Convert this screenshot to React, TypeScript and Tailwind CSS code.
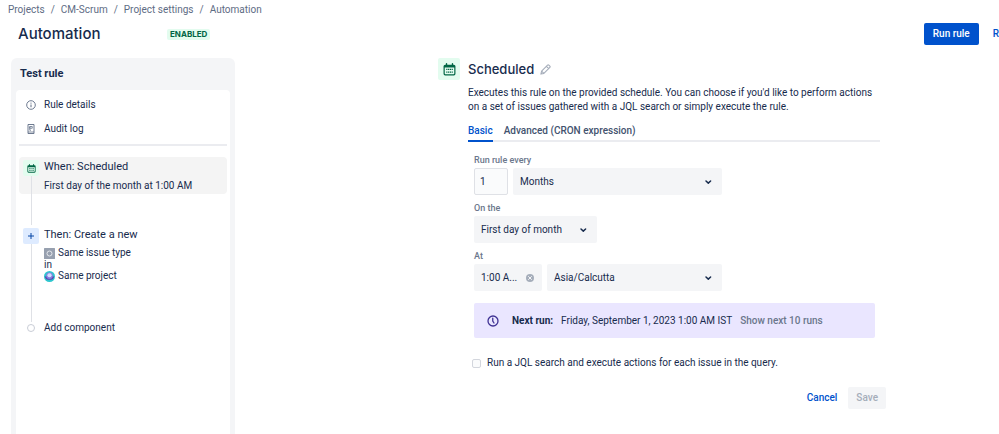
import { ReactNode, SVGProps, useState } from "react";

const breadcrumbs = ["Projects", "CM-Scrum", "Project settings", "Automation"];

function CalendarIcon(props: SVGProps<SVGSVGElement>) {
  return (
    <svg viewBox="0 0 24 24" fill="none" aria-hidden="true" {...props}>
      <path d="M6.500 1.500v4M17.500 1.500v4" stroke="currentColor" strokeWidth="2.600" strokeLinecap="round" />
      <path
        fillRule="evenodd"
        clipRule="evenodd"
        fill="currentColor"
        d="M4 3h16a3 3 0 0 1 3 3v14a3 3 0 0 1-3 3H4a3 3 0 0 1-3-3V6a3 3 0 0 1 3-3Zm-.8 5.500V19.500a1.300 1.300 0 0 0 1.300 1.300h15a1.300 1.300 0 0 0 1.300-1.300V8.500H3.200Z"
      />
      <path
        fill="currentColor"
        d="M6 10.700h2.200v2.200H6zM9.300 10.700h2.200v2.200H9.300zM12.600 10.700h2.200v2.200h-2.200zM15.900 10.700h2.200v2.200h-2.200zM6 15.600h2.200v2.200H6zM9.300 15.600h2.200v2.200H9.300zM12.600 15.600h2.200v2.200h-2.200zM15.900 15.600h2.200v2.200h-2.200z"
      />
    </svg>
  );
}

function InfoIcon() {
  return (
    <svg viewBox="0 0 20 20" className="size-[10px]" fill="none" stroke="currentColor" strokeWidth="1.800" aria-hidden="true">
      <circle cx="10" cy="10" r="8.600" />
      <path d="M10 9v5.500" strokeWidth="2" />
      <circle cx="10" cy="6.200" r="1.200" fill="currentColor" stroke="none" />
    </svg>
  );
}

function LogIcon() {
  return (
    <svg viewBox="0 0 20 20" className="size-[10px]" fill="none" stroke="currentColor" strokeWidth="1.800" aria-hidden="true">
      <path d="M4 1h12v18H4z" strokeLinejoin="round" />
      <path d="M7.500 5h5v3.500h-5zM7.500 5v7.500h2.500M4 16h12" strokeWidth="1.500" />
    </svg>
  );
}

function PencilIcon() {
  return (
    <svg viewBox="0 0 24 24" className="size-[11px]" fill="none" stroke="currentColor" strokeWidth="2.400" strokeLinejoin="round" aria-hidden="true">
      <path d="M2 22l1.500-6.500L16.500 2.500a2 2 0 0 1 2.800 0l2.200 2.200a2 2 0 0 1 0 2.800L8.500 20.500 2 22ZM14 5l5 5M3.500 15.500l5 5" />
    </svg>
  );
}

function ClockIcon() {
  return (
    <svg viewBox="0 0 24 24" className="size-3" fill="none" stroke="currentColor" strokeWidth="2.600" strokeLinecap="round" aria-hidden="true">
      <circle cx="12" cy="12" r="10" />
      <path d="M11.500 6.500V12l2.500 4" />
    </svg>
  );
}

function IssueTypeIcon() {
  return (
    <svg viewBox="0 0 22 22" className="size-[11px]" aria-hidden="true">
      <rect width="22" height="22" rx="1" fill="#97a0af" />
      <circle cx="11" cy="11" r="5" fill="none" stroke="#e4e7ec" strokeWidth="2" />
    </svg>
  );
}

function ProjectIcon() {
  return (
    <svg viewBox="0 0 22 22" className="size-[11px]" aria-hidden="true">
      <circle cx="11" cy="11" r="11" fill="#2fc6cf" />
      <path d="M1.500 11h19a9.800 9.800 0 0 1-19 0Z" fill="#5b3fb0" />
      <circle cx="11" cy="9.500" r="6.500" fill="#8a7fe0" />
      <circle cx="11" cy="8.500" r="4.200" fill="#d5dcff" />
      <path d="M4 17.500h14a10 10 0 0 1-14 0Z" fill="#2fc6cf" />
    </svg>
  );
}

function Step({ icon, active, children }: { icon: ReactNode; active?: boolean; children: ReactNode }) {
  return (
    <div className={`flex rounded-sm ${active ? "bg-[#f4f4f4]" : ""}`}>
      <div className="flex w-6 flex-col items-center pt-[3px]">
        {icon}
        <div className="w-px flex-1 bg-[#dfe1e6]" />
      </div>
      <div className="flex-1 pl-px">{children}</div>
    </div>
  );
}

function Connector({ className }: { className: string }) {
  return (
    <div className={`flex w-6 justify-center ${className}`}>
      <div className="w-px bg-[#dfe1e6]" />
    </div>
  );
}

function Select({ id, label, value, className }: { id: string; label?: string; value: string; className: string }) {
  return (
    <div className={`relative ${className}`}>
      <select
        id={id}
        aria-label={label}
        defaultValue={value}
        className="h-[27px] w-full appearance-none rounded-xs bg-[#f4f5f7] pr-6 pl-[7px]"
      >
        <option>{value}</option>
      </select>
      <svg
        viewBox="0 0 12 12"
        className="pointer-events-none absolute top-2 right-2 size-3"
        fill="none"
        stroke="currentColor"
        strokeWidth="1.500"
        strokeLinecap="round"
        strokeLinejoin="round"
        aria-hidden="true"
      >
        <path d="M4 5l2.300 2.100L8.600 5" />
      </svg>
    </div>
  );
}

function Sidebar() {
  return (
    <aside className="flex w-56 shrink-0 flex-col rounded-t-md bg-[#f4f5f7] px-[5px]">
      <h2 className="px-1 py-2 text-[11px] leading-4 font-bold">Test rule</h2>
      <div className="flex-1 rounded-t-sm bg-white px-[3px] pt-[3px]">
        <nav className="border-b-2 border-[#ebecf0] pb-[3px]">
          <a href="#details" className="flex h-6 items-center pl-[7px]">
            <span className="w-[18px] text-[#5e6c84]"><InfoIcon /></span>
            Rule details
          </a>
          <a href="#audit" className="flex h-6 items-center pl-[7px]">
            <span className="w-[18px] text-[#5e6c84]"><LogIcon /></span>
            Audit log
          </a>
        </nav>

        <div className="pt-[11px]">
          <Step
            active
            icon={
              <span className="grid size-4 place-items-center rounded-xs bg-[#e3fcef] text-[#006644]">
                <CalendarIcon className="size-[9px]" />
              </span>
            }
          >
            <h3 className="pt-[2px] text-[11px] leading-4">When: Scheduled</h3>
            <p className="pt-1 pb-px leading-[14px]">First day of the month at 1:00 AM</p>
          </Step>
          <Connector className="h-[31px]" />
          <Step
            icon={
              <span className="grid size-4 place-items-center rounded-xs bg-[#deebff] text-[#0747a6]">
                <svg viewBox="0 0 6 6" className="size-[6px]" stroke="currentColor" aria-hidden="true">
                  <path d="M3 0v6M0 3h6" />
                </svg>
              </span>
            }
          >
            <h3 className="pt-[2px] text-[11px] leading-4">Then: Create a new</h3>
            <div className="pt-1 leading-3">
              <p className="flex items-center gap-[3px]"><IssueTypeIcon /> Same issue type</p>
              <p className="leading-[11px]">in</p>
              <p className="flex items-center gap-[3px]"><ProjectIcon /> Same project</p>
            </div>
          </Step>
          <Connector className="h-10" />
          <button type="button" className="flex items-center">
            <span className="grid w-6 place-items-center">
              <span className="size-2 rounded-full border border-[#c9cdd6]" />
            </span>
            <span className="pl-px leading-3">Add component</span>
          </button>
        </div>
      </div>
    </aside>
  );
}

function ScheduleForm() {
  const [count, setCount] = useState("1");
  const [time, setTime] = useState("1:00 A...");

  return (
    <form className="w-[448px]" onSubmit={(e) => e.preventDefault()}>
      <div className="flex gap-2">
        <span className="grid size-[22px] shrink-0 place-items-center rounded-xs bg-[#e3fcef] text-[#006644]">
          <CalendarIcon className="size-[13px]" />
        </span>
        <div className="flex-1 pr-[6px]">
          <div className="flex h-[22px] items-center gap-[6px]">
            <h2 className="font-['Inter',sans-serif] text-[13px] font-medium">Scheduled</h2>
            <button type="button" aria-label="Rename" className="text-[#a5adba]"><PencilIcon /></button>
          </div>
          <p className="pt-[6px] leading-[14px]">
            Executes this rule on the provided schedule. You can choose if you'd like to perform actions
            on a set of issues gathered with a JQL search or simply execute the rule.
          </p>

          <div role="tablist" className="mt-[6px] flex gap-[11px] border-b-2 border-[#ebecf0] font-medium">
            <button type="button" role="tab" aria-selected="true" className="-mb-[2px] border-b-2 border-[#0052cc] pt-1 pb-[2px] leading-[14px] text-[#0052cc]">
              Basic
            </button>
            <button type="button" role="tab" aria-selected="false" className="-mb-[2px] pt-1 pb-1 leading-[14px] text-[#42526e]">
              Advanced (CRON expression)
            </button>
          </div>

          <div className="pt-[10px] pr-[5px] pl-[6px]">
            <label htmlFor="count" className="block text-[9px] leading-4 font-medium text-[#6b778c]">Run rule every</label>
            <div className="flex gap-[5px]">
              <input
                id="count"
                type="text"
                value={count}
                onChange={(e) => setCount(e.target.value)}
                className="h-[27px] w-[34px] rounded-xs border border-[#dfe1e6] bg-[#fafbfc] px-[5px]"
              />
              <Select id="unit" label="Interval unit" value="Months" className="w-[209px]" />
            </div>

            <label htmlFor="day" className="mt-[5px] block text-[9px] leading-4 font-medium text-[#6b778c]">On the</label>
            <Select id="day" value="First day of month" className="w-[123px]" />

            <label htmlFor="time" className="mt-[5px] block text-[9px] leading-4 font-medium text-[#6b778c]">At</label>
            <div className="flex gap-[5px]">
              <div className="flex h-[27px] w-[68px] items-center rounded-xs bg-[#f4f5f7] pr-2 pl-[7px]">
                <input
                  id="time"
                  type="text"
                  value={time}
                  onChange={(e) => setTime(e.target.value)}
                  className="w-full min-w-0 bg-transparent"
                />
                <button type="button" aria-label="Clear time" onClick={() => setTime("")} className="shrink-0">
                  <svg viewBox="0 0 16 16" className="size-2" aria-hidden="true">
                    <circle cx="8" cy="8" r="8" fill="#a5adba" />
                    <path d="M5 5l6 6M11 5l-6 6" stroke="#f4f5f7" strokeWidth="2" strokeLinecap="round" />
                  </svg>
                </button>
              </div>
              <Select id="zone" label="Time zone" value="Asia/Calcutta" className="w-[175px]" />
            </div>

            <div className="mt-3 flex h-[35px] items-center rounded-xs bg-[#eae6ff] pl-[13px]">
              <span className="w-[25px] text-[#403294]"><ClockIcon /></span>
              <b className="font-bold">Next run:</b>
              <span className="pl-2">Friday, September 1, 2023 1:00 AM IST</span>
              <button type="button" className="pl-2 font-medium text-[#6b778c]">Show next 10 runs</button>
            </div>
          </div>

          <label className="mt-[18px] flex items-center gap-[6px] pl-1 leading-[14px]">
            <input type="checkbox" className="size-[9px] appearance-none rounded-xs border border-[#d3d6dd] bg-[#fafbfc] checked:bg-[#0052cc]" />
            Run a JQL search and execute actions for each issue in the query.
          </label>
        </div>
      </div>

      <div className="mt-[17px] flex h-[22px] justify-end gap-[11px] font-medium">
        <button type="button" className="text-[#0052cc]">Cancel</button>
        <button type="submit" disabled className="rounded-xs bg-[#f4f5f7] px-2 text-[#a5adba]">Save</button>
      </div>
    </form>
  );
}

export default function App() {
  return (
    <div className="flex min-h-screen flex-col overflow-x-hidden bg-white font-['Roboto',sans-serif] text-[10px] leading-[14px] text-[#172b4d]">
      <nav aria-label="Breadcrumb" className="pt-[3px] pl-2 text-[#5e6c84]">
        <ol className="flex gap-[6px]">
          {breadcrumbs.map((item, i) => (
            <li key={item} className="flex gap-[6px]">
              {i > 0 && <span>/</span>}
              <a href="#">{item}</a>
            </li>
          ))}
        </ol>
      </nav>

      <header className="flex items-center pt-[6px] pl-[18px]">
        <h1 className="w-[149px] font-['Inter',sans-serif] text-[15px] leading-[22px] font-medium">Automation</h1>
        <span className="rounded-xs bg-[#e3fcef] px-[3px] font-['Inter',sans-serif] text-[8px] leading-[11px] font-bold text-[#006644]">ENABLED</span>
        <div className="ml-auto flex h-[22px] gap-[14px] font-medium">
          <button type="button" className="rounded-xs bg-[#0052cc] px-[9px] text-white">Run rule</button>
          <button type="button" className="text-[#0052cc]">R</button>
        </div>
      </header>

      <div className="flex flex-1 pt-[13px] pl-[11px]">
        <Sidebar />
        <main className="flex flex-1 justify-center pl-[90px]">
          <ScheduleForm />
        </main>
      </div>
    </div>
  );
}
